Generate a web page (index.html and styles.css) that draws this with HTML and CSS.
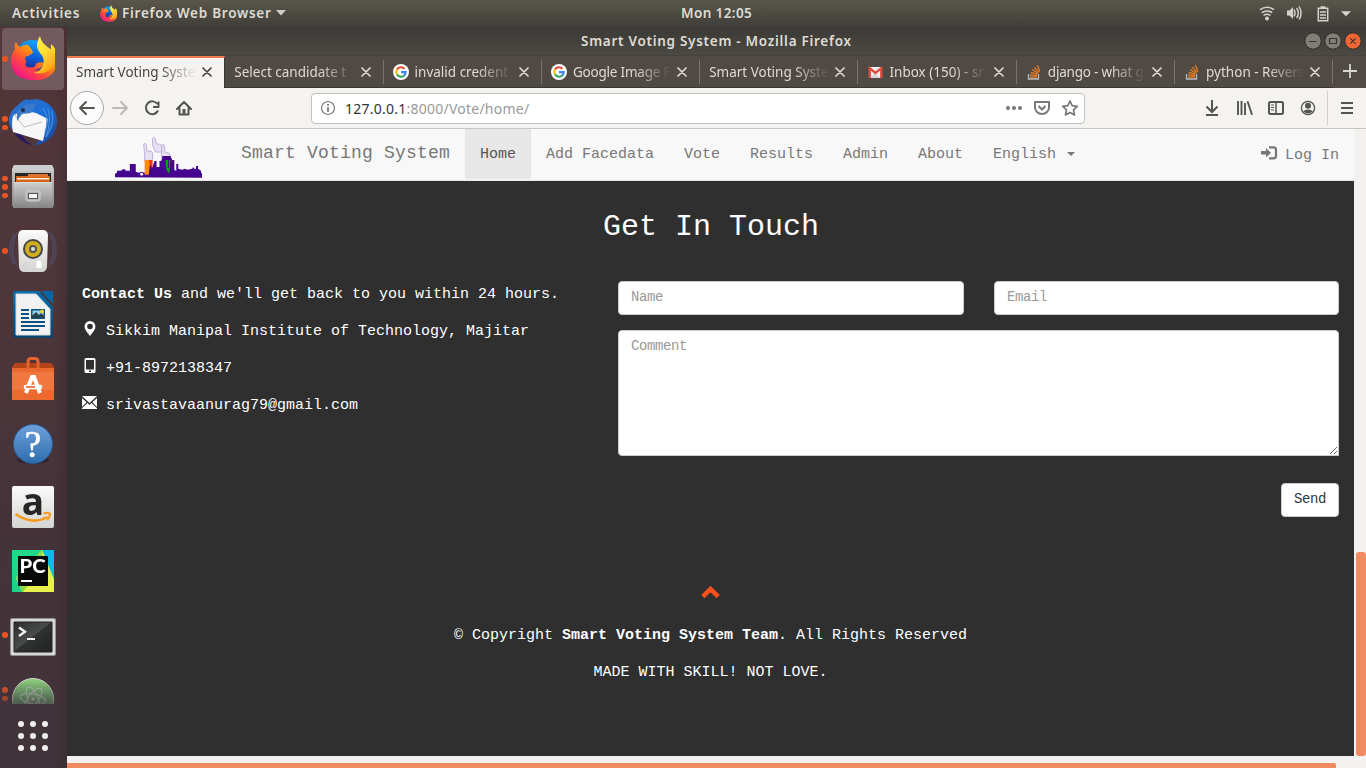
FILE: index.html
```html
<!DOCTYPE html>
<html lang="en">
<head>
<meta charset="utf-8">
<title>Smart Voting System</title>
<link rel="stylesheet" href="styles.css">
</head>
<body>
<svg class="defs" aria-hidden="true">
  <defs>
    <linearGradient id="fxBody" x1="0.85" y1="0.1" x2="0.15" y2="0.9"><stop offset="0" stop-color="#ffe226"/><stop offset=".35" stop-color="#ff980e"/><stop offset=".65" stop-color="#ff4a3c"/><stop offset="1" stop-color="#f0148c"/></linearGradient>
    <linearGradient id="fxGlobe" x1="0.6" y1="0" x2="0.4" y2="1"><stop offset="0" stop-color="#18a8f4"/><stop offset=".5" stop-color="#0a5fd8"/><stop offset="1" stop-color="#2c1a78"/></linearGradient>
    <linearGradient id="fxTail" x1="0.2" y1="0" x2="0.8" y2="1"><stop offset="0" stop-color="#fff44f"/><stop offset=".5" stop-color="#ffd830"/><stop offset="1" stop-color="#ff9a10"/></linearGradient>
    <linearGradient id="bird" x1="0" y1="0" x2="1" y2="1"><stop offset="0" stop-color="#2f6ec4"/><stop offset=".5" stop-color="#1c6fd8"/><stop offset="1" stop-color="#1b3f92"/></linearGradient>
    <linearGradient id="metal" x1="0" y1="0" x2="0" y2="1"><stop offset="0" stop-color="#cfcfcf"/><stop offset="1" stop-color="#858585"/></linearGradient>
    <linearGradient id="white" x1="0" y1="0" x2="0" y2="1"><stop offset="0" stop-color="#fafafa"/><stop offset="1" stop-color="#d4d4d2"/></linearGradient>
    <linearGradient id="docBlue" x1="0" y1="0" x2="0" y2="1"><stop offset="0" stop-color="#0b6cab"/><stop offset="1" stop-color="#064468"/></linearGradient>
    <linearGradient id="helpBlue" x1="0" y1="0" x2="0" y2="1"><stop offset="0" stop-color="#6fa0dc"/><stop offset="1" stop-color="#2d6dac"/></linearGradient>
    <linearGradient id="termBg" x1="0" y1="0" x2="1" y2="1"><stop offset="0" stop-color="#2b2d2d"/><stop offset=".48" stop-color="#4a4c4c"/><stop offset=".5" stop-color="#303232"/><stop offset="1" stop-color="#202222"/></linearGradient>
    <linearGradient id="atomBg" x1="0" y1="0" x2="0" y2="1"><stop offset="0" stop-color="#8fca7c"/><stop offset="1" stop-color="#3c7c5c"/></linearGradient>
    <symbol id="firefox" viewBox="0 0 44 45">
      <circle cx="21" cy="21" r="17" fill="url(#fxGlobe)"/>
      <path d="M5 6c1 2 2 4 4 5 3-2 5-2 8-2l4 5 1 3-5 3c-2 0-3 1-3 3 2 2 1 4 0 6 2 3 6 3 9 2 2-1 1-3 3-4 3-1 5-1 7 0-2 5-6 7-11 7 9 2 15-4 16-12 1 3 1 5 0 8 3-4 3-8 2-12V8c7 6 8 15 5 23-3 9-12 14-22 13C9 44 0 37 0 25c0-6 2-9 4-12-1-3 0-5 1-7z" fill="url(#fxBody)"/>
      <path d="M29 0c-4 7-4 12 0 17 4 4 5 9 2 14-2 4-5 5-8 6 11 2 21-3 21-15C44 11 31 12 29 0z" fill="url(#fxTail)"/>
    </symbol>
    <symbol id="close" viewBox="0 0 10 10"><path d="M1 1l8 8M9 1L1 9" fill="none" stroke="currentColor" stroke-width="1.7" stroke-linecap="round"/></symbol>
    <symbol id="google" viewBox="0 0 16 16">
      <circle cx="8" cy="8" r="8" fill="#fff"/>
      <g fill="none" stroke-width="2.1">
        <path d="M4 5.4A4.7 4.7 0 0 1 11.4 4.7" stroke="#ea4335"/>
        <path d="M4 10.4a4.8 4.8 0 0 1 0-5" stroke="#fbbc05"/>
        <path d="M4 10.4a4.7 4.7 0 0 0 7.1 1.2" stroke="#34a853"/>
        <path d="M8 8.1h4.7A4.7 4.7 0 0 1 11 11.6" stroke="#4285f4"/>
      </g>
    </symbol>
    <symbol id="gmail" viewBox="0 0 16 16">
      <path d="M2 3h13v11H2z" fill="#efefef"/><path d="M3 14l5-5 5 5z" fill="#d8d8d8"/>
      <path d="M2.700 14V4.2L8.500 9l5.800-4.800V14" fill="none" stroke="#df4a3e" stroke-width="2.4"/>
    </symbol>
    <symbol id="stack" viewBox="0 0 16 16">
      <path d="M2.500 10v5h10v-5" fill="none" stroke="#b9bdc0" stroke-width="1.3"/>
      <path d="M4 13.100h7M4.100 10.900l7 .7M4.700 8.400l6.700 1.800M6 5.600l6 3.500M8.300 3.100l4.600 5.200M11.300 1.200l2.600 6.300" stroke="#f47f20" stroke-width="1.2"/>
    </symbol>
  </defs>
</svg>

<div class="desktop">
  <header class="topbar">
    <span class="ui activities">Activities</span>
    <svg class="top-fox"><use href="#firefox"/></svg>
    <span class="ui app-name">Firefox Web Browser</span>
    <svg class="app-caret" viewBox="0 0 10 6"><path d="M0 0h10L5 5.500z" fill="#cfcdc8"/></svg>
    <span class="ui clock">Mon 12:05</span>
    <svg class="tray" viewBox="0 0 100 20">
      <g fill="none" stroke="#d4d2cd" stroke-width="1.500">
        <path d="M4 6.700q7-4.800 14 0M5.700 9.700q5.300-3.600 10.600 0M7.500 12.500q3.500-2.500 7 0"/>
        <path d="M38 6.500q2 3.500 0 7M40.700 5q3.200 5 0 10M43.200 3.500q3.600 6.500 0 13" stroke-width="1.500"/>
        <path d="M62.300 5.300h9.400v12.400h-9.400zM64.500 4h5M64 9h6M64 12h6M64 15h6"/>
      </g>
      <circle cx="11" cy="15.500" r="2" fill="#d4d2cd"/>
      <path d="M31 7.500h2.500L37 4v12l-3.500-3.500H31zM85 8.200h10l-5 5z" fill="#d4d2cd"/>
    </svg>
  </header>

  <div class="workspace">
    <aside class="dock">
      <div class="dock-list">
        <div class="dock-item current">
          <i class="dots"><b></b></i>
          <svg viewBox="0 0 66 64"><use href="#firefox" x="11" y="9" width="44" height="45"/></svg>
        </div>
        <div class="dock-item">
          <i class="dots"><b></b><b></b></i>
          <svg viewBox="0 0 66 64">
            <path d="M18 14c3-3 5-5 9-6l2 1c14-4 28 7 28 21 0 12-8 23-23 24 3-3 8-5 9-10C24 46 9 42 9 30c0-8 4-12 9-16z" fill="url(#bird)"/>
            <path d="M14 40c3 8 11 13 18 14-5-3-8-6-10-10z" fill="#2a1a62"/>
            <path d="M13 25q-2 8 0 16l30 9 5-22-12-6-14-3z" fill="#f7f7f8"/>
            <path d="M14 23l10 13 18-5" fill="none" stroke="#b9bcc4"/>
            <path d="M43 17q7 11 2 25M48 18q4 11-2 28M52 20q3 14-6 26" fill="none" stroke="#3f8fe0" stroke-width="1.300"/>
            <path d="M17 21q8-10 19-8l-5 9-9 1-5 7z" fill="#3a79cc"/><circle cx="23" cy="19" r="2" fill="#222d44"/>
          </svg>
        </div>
        <div class="dock-item">
          <i class="dots"><b></b><b></b><b></b></i>
          <svg viewBox="0 0 66 64">
            <path d="M14 10h38l2 4v37H12V14z" fill="url(#metal)"/><path d="M14 10h38l2 6H12z" fill="#cdcdcd"/>
            <path d="M15 18h36v10H15z" fill="#282522"/><path d="M16 21h34v7H16z" fill="#d4631d"/><path d="M28 19h20v3H28z" fill="#df742d"/><path d="M17 23h32v1.500H17z" fill="#fff1d6"/>
            <path d="M14 27h38l1 26H13z" fill="url(#metal)"/><path d="M14 27.500h38" stroke="#ddd"/>
            <rect x="26" y="36" width="14" height="10" rx="2" fill="#b5b5b5" stroke="#d0d0d0"/><rect x="28.500" y="38.500" width="9" height="5" fill="#f3f3f3" stroke="#555"/>
          </svg>
        </div>
        <div class="dock-item">
          <i class="dots"><b></b></i>
          <svg viewBox="0 0 66 64">
            <path d="M17 13q-9 18 0 34M14 15q-8 16 0 30M49 13q9 18 0 34M52 15q8 16 0 30" fill="none" stroke="#4d4b66" stroke-width="1.500"/>
            <path d="M22 11h22q4 1 4 6l-1 31q-1 5-5 5H24q-4 0-5-5l-1-31q0-5 4-6z" fill="url(#white)"/>
            <circle cx="33" cy="30" r="10" fill="#44474a"/><circle cx="33" cy="30" r="8" fill="#d3ae1c"/><circle cx="33" cy="30" r="4" fill="#555"/><circle cx="33" cy="30" r="2" fill="#ddd"/>
            <path d="M39 42v7" stroke="#fff" stroke-width="5"/><circle cx="25.500" cy="46" r="2" fill="none" stroke="#d0d0d0"/>
          </svg>
        </div>
        <div class="dock-item">
          <svg viewBox="0 0 66 64">
            <path d="M15 8h24l14 16v30q0 1-1 1H15q-2 0-2-2V10q0-2 2-2z" fill="url(#docBlue)"/><path d="M41 8h12v13z" fill="#0766a5"/>
            <path d="M16 11h20l14 15v26H16z" fill="#f1f2f1"/><path d="M16 11h20l14 15v26H16z" fill="none" stroke="#d6dadd"/>
            <path d="M21 27h8M21 31h8M21 35h8M21 39h24M21 43h24M21 47h18" stroke="#0b527f" stroke-width="2"/>
            <path d="M31 26h14v10H31z" fill="#0b527f"/><path d="M32.500 27.500h11v6h-11z" fill="#8ed0ee"/><circle cx="42" cy="28.500" r="2" fill="#e7cc38"/><path d="M32 35v-2l4-4 3 3 2-2 3 3v2z" fill="#26434d"/>
          </svg>
        </div>
        <div class="dock-item">
          <svg viewBox="0 0 66 64">
            <g transform="translate(0 4)">
            <path d="M12 16l3-4h36l3 4v8H12z" fill="#b54418"/><path d="M12 17h42v32H12z" fill="#f07840"/><path d="M12 17h42v4H12zM12 39h42v10H12z" fill="#ec6a30"/>
            <path d="M28 20V10.500q0-3 3-3h4q3 0 3 3V20" fill="none" stroke="#e8632b" stroke-width="3"/>
            <path d="M26 42l6-16h2l6 16" fill="none" stroke="#fff" stroke-width="4"/>
            <path d="M26 36h14" stroke="#fff" stroke-width="4.600" stroke-linecap="round"/><path d="M26 36h9" stroke="#ec7038" stroke-width="1.800"/>
            </g>
          </svg>
        </div>
        <div class="dock-item">
          <svg viewBox="0 0 66 64">
            <ellipse cx="33" cy="49" rx="16" ry="4" fill="#33252b"/><circle cx="33" cy="33" r="19.500" fill="url(#helpBlue)" stroke="#275f99"/>
            <text x="33" y="45.500" text-anchor="middle" font-family="Liberation Serif, serif" font-size="37" fill="#fff" stroke="#fff" stroke-width=".6">?</text>
          </svg>
        </div>
        <div class="dock-item">
          <svg viewBox="0 0 66 64">
            <rect x="12" y="11" width="42" height="42" rx="2" fill="url(#white)"/>
            <text x="33" y="39.500" text-anchor="middle" font-family="Open Sans, sans-serif" font-weight="bold" font-size="37" fill="#252525">a</text>
            <path d="M15.500 39q17 11.500 32 3" fill="none" stroke="#f79a1c" stroke-width="2.500"/><path d="M43.500 38.500q4-1.500 6.500 0 0 4-3 6.500" fill="none" stroke="#f79a1c" stroke-width="2"/>
          </svg>
        </div>
        <div class="dock-item">
          <svg viewBox="0 0 66 64">
            <path d="M12 11h42v42H12z" fill="#21d789"/><path d="M43 11h11v31z" fill="#08bde8"/><path d="M12 43l30-32 12 29v13H12z" fill="#e8f04c"/><path d="M12 43l30-32 1 15-20 27H12z" fill="#8ddb45"/><path d="M12 31v22h10z" fill="#20d18a"/>
            <path d="M18 17h30v30H18z" fill="#090909"/><path d="M21 42h11" stroke="#fff" stroke-width="2"/>
            <text x="19.500" y="34" font-family="Lato, sans-serif" font-weight="900" font-size="19.500" fill="#fff" textLength="26" lengthAdjust="spacingAndGlyphs">PC</text>
          </svg>
        </div>
        <div class="dock-item">
          <i class="dots"><b></b></i>
          <svg viewBox="0 0 66 64">
            <rect x="10.500" y="15.500" width="45" height="37" rx="1.500" fill="#d7d7d7" stroke="#929292"/><path d="M14 19h38v30H14z" fill="url(#termBg)" stroke="#222"/>
            <path d="M19 24.500l6 4.200-6 4.300" fill="none" stroke="#eee" stroke-width="2.400"/><path d="M27 36h8" stroke="#eee" stroke-width="2"/>
          </svg>
        </div>
        <div class="dock-item cut">
          <i class="dots"><b></b><b></b></i>
          <svg viewBox="0 0 66 64">
            <circle cx="33" cy="32" r="20.500" fill="url(#atomBg)" stroke="#cfd6cc"/>
            <g fill="none" stroke="#b2c6b4" stroke-width="1.200"><ellipse cx="33" cy="32" rx="13" ry="5" transform="rotate(10 33 32)"/><ellipse cx="33" cy="32" rx="13" ry="5" transform="rotate(68 33 32)"/><ellipse cx="33" cy="32" rx="13" ry="5" transform="rotate(-52 33 32)"/></g>
            <circle cx="33" cy="32" r="1.500" fill="#c4d4c4"/>
          </svg>
        </div>
      </div>
      <div class="apps"><b></b><b></b><b></b><b></b><b></b><b></b><b></b><b></b><b></b></div>
    </aside>

    <section class="window">
      <div class="titlebar">
        <span class="ui win-title">Smart Voting System - Mozilla Firefox</span>
        <svg class="win-buttons" viewBox="0 0 60 20">
          <g stroke="#2e2d29"><circle cx="10" cy="10" r="8.200" fill="#807e77"/><circle cx="30" cy="10" r="8.200" fill="#807e77"/><circle cx="50" cy="10" r="8.200" fill="#ee6536"/></g>
          <g fill="none" stroke="#34332f" stroke-width="1.200"><path d="M6.500 10.500h7M26.500 7.500h7v5h-7zM47.300 7.300l5.400 5.400M52.700 7.300l-5.400 5.400"/></g>
        </svg>
      </div>

      <div class="tabs">
        <div class="tab active"><span class="tab-text">Smart Voting Syste</span><svg class="x"><use href="#close"/></svg></div>
        <div class="tab"><span class="tab-text">Select candidate t</span><svg class="x"><use href="#close"/></svg></div>
        <div class="tab"><svg class="fav"><use href="#google"/></svg><span class="tab-text">invalid credent</span><svg class="x"><use href="#close"/></svg></div>
        <div class="tab"><svg class="fav"><use href="#google"/></svg><span class="tab-text snug">Google Image F</span><svg class="x"><use href="#close"/></svg></div>
        <div class="tab"><span class="tab-text">Smart Voting Syste</span><svg class="x"><use href="#close"/></svg></div>
        <div class="tab"><svg class="fav"><use href="#gmail"/></svg><span class="tab-text">Inbox (150) - sr</span><svg class="x"><use href="#close"/></svg></div>
        <div class="tab"><svg class="fav"><use href="#stack"/></svg><span class="tab-text snug">django - what g</span><svg class="x"><use href="#close"/></svg></div>
        <div class="tab"><svg class="fav"><use href="#stack"/></svg><span class="tab-text">python - Revers</span><svg class="x"><use href="#close"/></svg></div>
        <svg class="plus" viewBox="0 0 14 14"><path d="M7 0v14M0 7h14" stroke="#d8d6d0" stroke-width="1.800"/></svg>
      </div>

      <div class="toolbar">
        <div class="history">
          <svg viewBox="0 0 134 40" fill="none" stroke="#55554f" stroke-width="2" stroke-linecap="round" stroke-linejoin="round">
            <circle cx="20" cy="20" r="16.500" fill="#fcfcfc" stroke="#aaa8a5" stroke-width="1"/>
            <path d="M27 20H13M19 14l-6 6 6 6"/>
            <path d="M46 20h14M54 14l6 6-6 6" stroke="#bbb9b6"/>
            <path d="M90.500 16a6.400 6.400 0 1 0 .6 6.500M91.500 13.500v5.500H86" stroke-linecap="butt"/>
            <path d="M110 21l7-7 7 7M112.500 20v6.500h9V20" stroke-width="2"/><path d="M117 21v5" stroke-width="3" stroke-linecap="butt"/>
          </svg>
        </div>
        <div class="urlbar">
          <svg class="info" viewBox="0 0 16 16"><circle cx="8" cy="8" r="6.500" fill="none" stroke="#777" stroke-width="1.200"/><path d="M8 7.200V12M8 4v1.800" stroke="#777" stroke-width="1.800"/></svg>
          <span class="url"><b>127.0.0.1</b>:8000/Vote/home/</span>
          <svg class="url-actions" viewBox="0 0 80 20" fill="none" stroke="#777" stroke-width="2">
            <g fill="#777" stroke="none"><circle cx="8" cy="10" r="2"/><circle cx="14" cy="10" r="2"/><circle cx="20" cy="10" r="2"/></g>
            <path d="M35 4h14v5.500a7 6.500 0 0 1-14 0z" stroke-linejoin="round"/><path d="M38.500 8l3.500 3.500L45.500 8"/>
            <path d="M70 3l2.200 4.700 5 .6-3.700 3.500 1 5.100-4.500-2.500-4.500 2.500 1-5.100-3.700-3.500 5-.6z" stroke-width="1.700" stroke-linejoin="round"/>
          </svg>
        </div>
        <svg class="tools" viewBox="0 0 170 40" fill="none" stroke="#55554f" stroke-width="2">
          <path d="M16 12v12M10.500 18.500L16 24l5.500-5.500M10 27h12"/>
          <path d="M42 13v14M45.500 13v14M49 15v12M51.500 13.300l4.500 13.500" stroke-width="1.900"/>
          <rect x="73" y="14" width="14" height="12" rx="1.500"/><path d="M80 14v12" stroke-width="1.500"/><path d="M75 17h3M75 19.500h3M75 22h3" stroke-width="1"/>
          <circle cx="112" cy="20" r="6.600" stroke-width="1.300"/><circle cx="112" cy="17.700" r="3" fill="#55554f" stroke="none"/><path d="M107 23q5-3 10 0-5 5-10 0z" fill="#55554f" stroke="none"/>
          <path d="M131.500 3v34" stroke="#d4d2cf" stroke-width="1"/>
          <path d="M145 15h12M145 20h12M145 25h12"/>
        </svg>
      </div>

      <div class="viewport">
        <main class="page">
          <nav class="navbar">
            <svg class="logo" viewBox="0 0 88 44">
              <g fill="#e7e0f2" stroke="#b9abd8" stroke-width=".9">
                <path d="M30 26v-6l-1-11q1-2 2.500 0l1 7 4 0 1.500 2v6l-1.500 3z"/>
                <path d="M41 17l-3-7V3q1-2 2.500 0l1.500 6 4 0 1.500 3v5z"/>
                <path d="M48 26l-1-7 .5-9q1-2 2.500 0l.5 7 4 1 1.500 3-1 5z"/>
              </g>
              <path d="M0 42.500V39l2-1v-2h4l2-1.500h2l1 1.500h4v-7h6v8l3 1 3-1 3 1 4-1 1-5h3l2-6h2v6h3v-6h2l1-5h8l3 6v8l3 1v-7h2v5l4 1 3-1 2 1 5-1 1-2 1 2h2v-3h2v3l3 2v2l3 1v4z" fill="#45058f"/>
              <path d="M30 25h7v15h-7z" fill="#fb8c05"/><path d="M34.500 25H38v8l-2.500 3z" fill="#fb3507"/>
              <path d="M48 25v14M59 25v14" stroke="#45058f" stroke-width="2"/>
              <path d="M51 25h5l-1 14-3-4z" fill="#08a51d"/><path d="M54 25v8" stroke="#45058f"/><path d="M36 30l2 5v6h-4l1-9z" fill="#45058f"/><circle cx="27" cy="39.500" r="1.500" fill="#fff"/>
            </svg>
            <a class="brand">Smart Voting System</a>
            <a class="nav-link active">Home</a>
            <a class="nav-link">Add Facedata</a>
            <a class="nav-link">Vote</a>
            <a class="nav-link">Results</a>
            <a class="nav-link">Admin</a>
            <a class="nav-link">About</a>
            <a class="nav-link">English <i class="caret"></i></a>
            <a class="nav-link login">
              <svg viewBox="0 0 17 14"><path d="M0 5h5V2l5 4.800-5 4.700v-3H0z" fill="#777"/><path d="M8 1.300h4.500q2.500 0 2.500 2.500v6q0 2.500-2.500 2.500H8" fill="none" stroke="#777" stroke-width="2.200"/></svg>
              Log In
            </a>
          </nav>

          <section class="contact">
            <h2>Get In Touch</h2>
            <div class="columns">
              <div class="details">
                <p><b>Contact Us</b> and we'll get back to you within 24 hours.</p>
                <p><svg viewBox="0 0 15 15"><path d="M8 0a5.400 5.400 0 0 1 5.400 5.400C13.400 9 10 12 8 15 6 12 2.600 9 2.600 5.400A5.400 5.400 0 0 1 8 0zm0 2.700a2.800 2.800 0 1 0 0 5.600 2.800 2.800 0 0 0 0-5.600z" fill="#fff" fill-rule="evenodd"/></svg>Sikkim Manipal Institute of Technology, Majitar</p>
                <p><svg viewBox="0 0 15 15"><path d="M4 0h8q1.500 0 1.500 1.500v12Q13.500 15 12 15H4q-1.500 0-1.500-1.500v-12Q2.500 0 4 0zm0 2v9.500h8V2zm3 10.500V14h2v-1.500z" fill="#fff" fill-rule="evenodd"/></svg>+91-8972138347</p>
                <p><svg viewBox="0 0 15 15"><path d="M0 1h15L7.500 8zM0 3l4.600 4.200L0 12zM15 3l-4.600 4.200L15 12zM0 14v-.7l5.500-5.200 2 1.900 2-1.900 5.500 5.200v.7z" fill="#fff"/></svg>srivastavaanurag79@gmail.com</p>
              </div>
              <form class="form">
                <div class="row"><input placeholder="Name"><input placeholder="Email"></div>
                <textarea placeholder="Comment"></textarea>
                <button type="button">Send</button>
              </form>
            </div>
          </section>

          <footer class="footer">
            <svg viewBox="0 0 19 13"><path d="M1.800 10.700L9.500 3l7.700 7.700" fill="none" stroke="#f4511e" stroke-width="4.600"/></svg>
            <p>© Copyright <b>Smart Voting System Team</b>. All Rights Reserved</p>
            <p>MADE WITH SKILL! NOT LOVE.</p>
          </footer>
        </main>
        <div class="vscroll"><div class="vthumb"></div></div>
        <div class="hscroll"><div class="hthumb"></div></div>
      </div>
    </section>
  </div>
</div>
</body>
</html>
```
FILE: styles.css
```css
* { box-sizing: border-box; }
body { margin: 0; overflow: hidden; }
.defs { position: absolute; width: 0; height: 0; }
svg { display: block; flex: none; }

.desktop {
  width: 1366px; height: 768px;
  display: flex; flex-direction: column;
  font-family: "Noto Sans", "Open Sans", sans-serif;
}
.ui { font-weight: 600; font-size: 13.5px; line-height: 20px; color: #dfdbd2; white-space: nowrap; }

/* Top panel */
.topbar {
  height: 27px; flex: none;
  display: flex; align-items: center;
  padding: 0 10px 1px 12px;
  background: linear-gradient(#5a564c, #403e39);
}
.activities { width: 88px; letter-spacing: .8px; }
.top-fox { width: 17px; height: 17px; margin-right: 5px; }
.app-name { width: 150px; letter-spacing: .75px; }
.app-caret { width: 10px; height: 6px; margin-left: 4px; }
.clock { margin-left: 395px; letter-spacing: .4px; }
.tray { width: 100px; height: 20px; margin-left: auto; }

.workspace { flex: 1; display: flex; min-height: 0; }

/* Dock */
.dock {
  width: 67px; flex: none;
  display: flex; flex-direction: column;
  background: linear-gradient(90deg, rgba(40, 25, 30, 0) 80%, rgba(40, 25, 30, .2)), linear-gradient(#523639, #4e363a 35%, #46333a 65%, #40343a);
}
.dock-list {
  height: 677px; overflow: hidden;
  mask-image: linear-gradient(#000 655px, rgba(0, 0, 0, .4) 677px);
}
.dock-item { position: relative; width: 66px; height: 64px; }
.dock-item svg { width: 66px; height: 64px; }
.dock-item.current::before {
  content: ""; position: absolute; left: 2px; top: 1px; width: 62px; height: 62px;
  border-radius: 4px; background: #725a5e;
}
.dock-item.current svg { position: relative; }
.dots {
  position: absolute; left: 2px; top: 0; height: 64px; z-index: 1;
  display: flex; flex-direction: column; justify-content: center; gap: 3px;
}
.dots b { width: 5.5px; height: 5.5px; border-radius: 50%; background: #e95420; }
.cut .dots { top: -5px; }
.apps {
  display: grid; grid-template-columns: repeat(3, 6px); gap: 6px;
  justify-content: center; margin: 17px 1px 0 0;
}
.apps b { width: 6px; height: 6px; border-radius: 50%; background: #f0efef; }

/* Browser chrome */
.window { width: 1299px; display: flex; flex-direction: column; }
.titlebar {
  height: 28px; flex: none;
  display: flex; align-items: center;
  padding: 0 3px 0 514px;
  background: linear-gradient(#3b3a36, #4b4943);
}
.win-title { letter-spacing: .72px; }
.win-buttons { width: 60px; height: 20px; margin-left: auto; }
.tabs {
  height: 33px; flex: none;
  display: flex;
  background: #4f4b44;
  border-top: 1px solid #45423c;
}
.tab {
  position: relative;
  width: 158.3px; flex: none;
  display: flex; align-items: center;
  padding: 0 13px 0 9px;
  font-size: 13.5px; color: #dfdbd2;
  border-bottom: 1px solid #393732;
}
.tab:not(.active)::after {
  content: ""; position: absolute; right: 0; top: 4px; width: 1px; height: 24px; background: #77736b;
}
.tab.active {
  background: #f4f3f2; color: #45443f;
  border-top: 2px solid #f0784d; border-bottom: 0;
  border-right: 1px solid #393732;
  padding-right: 12px; padding-bottom: 2px;
}
.tab-text {
  flex: 1; min-width: 0; overflow: hidden; white-space: nowrap; line-height: 20px;
  mask-image: linear-gradient(90deg, #000 calc(100% - 36px), transparent 100%);
}
.snug { letter-spacing: -.2px; }
.fav { width: 16px; height: 16px; margin-right: 6px; }
.x { width: 10px; height: 10px; margin-left: 6px; }
.plus { width: 14px; height: 14px; margin: 8px 0 0 10px; }
.toolbar {
  height: 41px; flex: none;
  display: flex; align-items: center;
  background: #f4f3f2;
  border-bottom: 1px solid #c8c5c1;
}
.history { width: 244px; }
.history svg { width: 134px; height: 40px; }
.urlbar {
  width: 774px; height: 31px;
  display: flex; align-items: center;
  padding: 0 4px 0 8px;
  background: #fff; border: 1px solid #c3c0bc; border-radius: 4px;
}
.info { width: 16px; height: 16px; }
.url { margin-left: 9px; font-size: 14px; letter-spacing: .24px; color: #999; }
.url b { font-weight: 400; color: #333; }
.url-actions { width: 80px; height: 20px; margin-left: auto; }
.tools { width: 170px; height: 40px; margin-left: auto; }

/* Page */
.viewport { height: 639px; display: grid; grid-template-columns: 1287px 12px; grid-template-rows: 627px 12px; }
.page {
  background: #2f2f2f; color: #fff; overflow: hidden;
  font: 15px/27px "Liberation Mono", "Courier New", monospace;
}
.navbar {
  height: 52px;
  display: flex; align-items: flex-start;
  background: #f8f8f8; border-bottom: 1px solid #e7e7e7;
  color: #777; line-height: 20px; white-space: nowrap;
}
.logo { width: 87px; height: 44px; margin: 6px 12px 0 48px; }
.brand { padding: 14px 15px 0; margin-left: 12px; font-size: 18px; letter-spacing: .2px; width: 239px; }
.nav-link { height: 50px; padding: 16px 15px 14px; }
.nav-link.active { background: #e7e7e7; color: #555; }
.caret { display: inline-block; margin-left: 2px; vertical-align: middle; border: 4px solid transparent; border-top-color: #777; border-bottom: 0; }
.login { display: flex; margin-left: auto; padding-top: 17px; }
.login svg { width: 17px; height: 14px; margin: 0 7px 0 0; }
.contact { padding: 30px 15px 0; }
h2 { margin: 0 0 37px; padding-left: 1px; text-align: center; font-size: 30px; font-weight: 400; line-height: 33px; }
.columns { display: flex; justify-content: space-between; }
p { margin: 0 0 10px; white-space: nowrap; }
.details svg { display: inline-block; width: 15px; height: 15px; margin-right: 9px; vertical-align: -1px; }
.form { width: 721px; display: flex; flex-direction: column; }
.row { display: grid; grid-template-columns: 346px 345px; gap: 30px; }
input, textarea {
  display: block; margin: 0; padding: 5px 12px 7px;
  font: 14px/20px "Liberation Mono", monospace; letter-spacing: -.4px; color: #555;
  background: #fff; border: 1px solid #ccc; border-radius: 4px;
}
input { height: 34px; width: 100%; }
textarea { height: 126px; margin-top: 15px; border-radius: 4px 4px 0 4px; }
::placeholder { color: #999; opacity: 1; }
button {
  align-self: flex-end; width: 58px; height: 34px; margin-top: 27px; padding: 0 0 2px;
  font: 14px/20px "Liberation Mono", monospace; letter-spacing: -.4px; color: #333;
  background: #fff; border: 1px solid #ccc; border-radius: 4px;
}
.footer { text-align: center; padding: 69px 0 0; }
.footer svg { width: 19px; height: 13px; margin: 0 auto 23px; }
.vscroll { background: #f2f1f0; padding: 423px 0 0 2px; }
.vthumb { height: 204px; background: #f08a60; border-radius: 3px; }
.hscroll { grid-column: 1 / 3; background: #f2f1f0; padding-top: 7px; }
.hthumb { width: 1269px; height: 5px; background: #f08a60; border-radius: 0 2px 0 0; }
```
